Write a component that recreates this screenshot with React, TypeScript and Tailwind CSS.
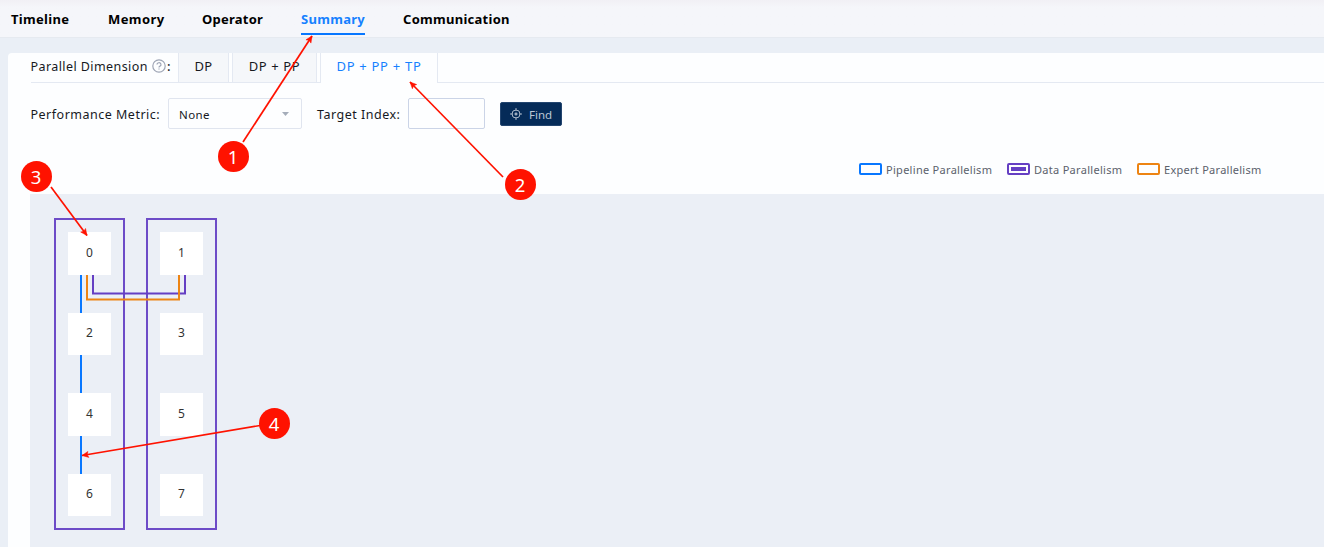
import React from "react";

type Mark = { n: number; x: number; y: number; from: [number, number]; to: [number, number] };

const marks: Mark[] = [
  { n: 1, x: 233, y: 156, from: [243, 142], to: [312, 36] },
  { n: 2, x: 520, y: 184, from: [503, 177], to: [410, 82] },
  { n: 3, x: 36, y: 176, from: [51, 187], to: [87, 235.5] },
  { n: 4, x: 274, y: 423, from: [260, 425.5], to: [82, 455.5] },
];

const columns = [
  [0, 2, 4, 6],
  [1, 3, 5, 7],
];

function Arrow({ from, to }: { from: [number, number]; to: [number, number] }) {
  const angle = (Math.atan2(to[1] - from[1], to[0] - from[0]) * 180) / Math.PI;
  return (
    <g fill="#ff1200" stroke="#ff1200">
      <line x1={from[0]} y1={from[1]} x2={to[0]} y2={to[1]} strokeWidth="1.7" />
      <path d="M0 0L-6.5 -3L-5.2 0L-6.5 3Z" strokeWidth="0.5" transform={`translate(${to[0]} ${to[1]}) rotate(${angle})`} />
    </g>
  );
}

function Annotations() {
  return (
    <div className="pointer-events-none absolute inset-0 z-20">
      <svg className="absolute inset-0" width="1324" height="547">
        {marks.map((m) => (
          <Arrow key={m.n} from={m.from} to={m.to} />
        ))}
      </svg>
      {marks.map((m) => (
        <div
          key={m.n}
          className="absolute flex size-[31px] items-center justify-center rounded-full bg-[#ff1200] pt-[2px] text-[18.5px] leading-none text-white"
          style={{ left: m.x - 15.5, top: m.y - 15.5 }}
        >
          {m.n}
        </div>
      ))}
    </div>
  );
}

function HelpIcon() {
  return (
    <svg width="14" height="14" viewBox="0 0 14 14" fill="none" stroke="#9ea5b5" strokeWidth="1.2">
      <circle cx="7" cy="7" r="6.2" />
      <path d="M5 5.6a2 1.8 0 1 1 3 1.5q-1 .5-1 1.3M7 9.4v1.2" />
    </svg>
  );
}

function AimIcon() {
  return (
    <svg width="12" height="12" viewBox="0 0 12 12" fill="none" stroke="#a7b4c6" strokeWidth="1">
      <circle cx="6" cy="6" r="4" />
      <circle cx="6" cy="6" r="1.1" fill="#a7b4c6" />
      <path d="M6 0v3M6 9v3M0 6h3M9 6h3" />
    </svg>
  );
}

function Graph() {
  return (
    <div className="relative ml-[22px] h-[353px] bg-[#ebeff6] pl-[24px] pt-6">
      <div className="flex gap-[21px]">
        {columns.map((nodes, c) => (
          <div key={c} className="flex h-[312px] w-[71px] flex-col items-center gap-[38px] border-2 border-[#6d4bc7] pt-[12.4px]">
            {nodes.map((n) => (
              <div key={n} className="relative z-10 flex h-[42.4px] w-[43px] shrink-0 items-center justify-center bg-white pb-px text-xs text-[#333]">
                {n}
              </div>
            ))}
          </div>
        ))}
      </div>
      <svg className="absolute left-0 top-0" width="220" height="340" fill="none" strokeWidth="2">
        <path d="M51 80V119M51 161V199M51 241V280" stroke="#0877ff" />
        <path d="M63 80V99.5H155V80" stroke="#653fc3" />
        <path d="M57 80V105.5H149V80" stroke="#ed8413" />
      </svg>
    </div>
  );
}

export default function App() {
  return (
    <div className="relative h-[547px] w-[1324px] overflow-hidden bg-[#eaeff6] font-['Noto_Sans',sans-serif] text-[13px] text-[#17191e]">
      <nav className="flex h-[38px] border-b border-[#e6eaf0] bg-linear-to-b from-[#f1f0f5] to-[#f5f6fa] to-20% pl-[11px] text-[13px] font-bold text-black whitespace-nowrap">
        <div className="w-[97px] pt-[10px] leading-[18px] tracking-[0.3px]">Timeline</div>
        <div className="w-[94px] pt-[10px] leading-[18px] tracking-[0.4px]">Memory</div>
        <div className="w-[99px] pt-[10px] leading-[18px] tracking-[0.25px]">Operator</div>
        <div className="mr-[38px] h-[35px] w-16 border-b-2 border-[#0877ff] pt-[10px] leading-[18px] tracking-[0.3px] text-[#1681ff]">Summary</div>
        <div className="pt-[10px] leading-[18px] tracking-[0.28px]">Communication</div>
      </nav>
      <main className="ml-2 mt-[15px] h-[494px] rounded-tl bg-[#fdfeff]">
        <div className="ml-[22.5px] flex h-[30px] border-b border-[#e4e9f2] leading-[26px] whitespace-nowrap">
          <div className="w-[121.5px] pt-px text-[12.5px] tracking-[0.42px]">Parallel Dimension</div>
          <div className="pt-1.5"><HelpIcon /></div>
          <div className="ml-px w-[11px] font-medium">:</div>
          <div className="h-[29px] w-[51px] border-x border-[#e4e9f2] bg-[#f5f7fa] text-center tracking-[0.4px]">DP</div>
          <div className="ml-[3px] h-[29px] w-[85px] border-x border-[#e4e9f2] bg-[#f5f7fa] text-center tracking-[0.6px]">DP + PP</div>
          <div className="ml-[3px] h-[30px] w-[118px] border-x border-[#e4e9f2] bg-[#fdfeff] text-center tracking-[0.7px] text-[#1681ff]">DP + PP + TP</div>
        </div>
        <div className="ml-[22.5px] mt-[15px] flex h-[31px] leading-[31px] whitespace-nowrap">
          <div className="w-[137.5px] pt-px text-[12.5px] tracking-[0.5px]">Performance Metric:</div>
          <div className="flex h-[31px] w-[134px] items-center justify-between rounded-xs border border-[#e0e5ef] pl-[10px] pr-[12px] text-[11.5px] tracking-[0.4px]">
            <span className="pt-[2px]">None</span>
            <svg width="7" height="4"><path d="M0 0h7L3.5 4z" fill="#a5adba" /></svg>
          </div>
          <div className="ml-[15px] w-[91px] pt-px text-[12.5px] tracking-[0.5px]">Target Index:</div>
          <input aria-label="Target Index" className="h-[31px] w-[77px] rounded-xs border border-[#cbd4e7] bg-[#fdfeff]" />
          <button className="ml-[15px] mt-1 flex h-[24px] w-[62px] items-center gap-[7px] rounded-xs border border-[#23456f] bg-[#052b58] pl-[9px] text-[11.5px] text-[#bcc7d6]">
            <AimIcon />
            <span className="pt-px">Find</span>
          </button>
        </div>
        <div className="flex h-[65px] items-start pl-[851px] pt-[30px] text-[11px] leading-[21px] whitespace-nowrap text-[#5b616c]">
          <i className="mt-1 h-3 w-[23px] rounded-xs border-2 border-[#0877ff]" />
          <span className="ml-1 w-[121px] tracking-[0.29px]">Pipeline Parallelism</span>
          <i className="mt-1 h-3 w-[23px] rounded-xs border-2 border-[#653fc3] p-[2px]"><b className="block h-1 bg-[#653fc3]" /></i>
          <span className="ml-1 w-[103px] tracking-[0.29px]">Data Parallelism</span>
          <i className="mt-1 h-3 w-[23px] rounded-xs border-2 border-[#ed8413]" />
          <span className="ml-1 tracking-[0.27px]">Expert Parallelism</span>
        </div>
        <Graph />
      </main>
      <Annotations />
    </div>
  );
}
